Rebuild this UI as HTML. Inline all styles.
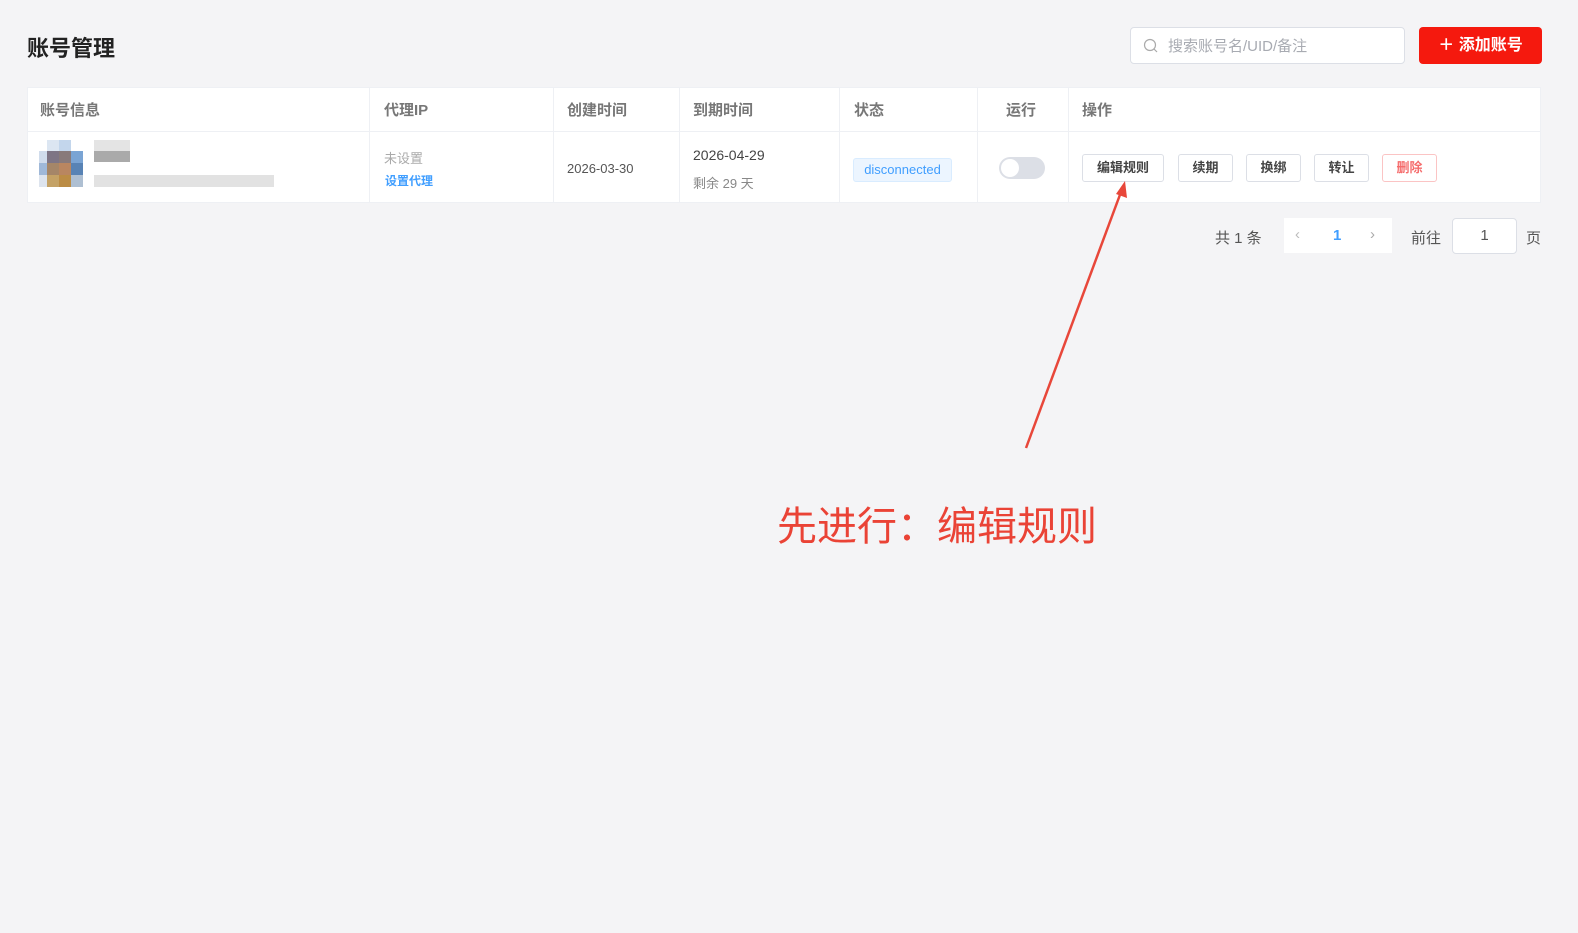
<!DOCTYPE html><html><head><meta charset="utf-8"><style>
body{margin:0;width:1578px;height:933px;background:#f4f4f6;font-family:"Liberation Sans","Noto Sans CJK SC",sans-serif;position:relative;overflow:hidden}
.a{position:absolute}
.h{font-size:15px;color:#777;font-weight:bold;top:99px}
.btn{position:absolute;top:154px;height:26px;border:1px solid #dcdfe6;border-radius:3px;background:#fff;font-size:13px;color:#444;font-weight:bold;text-align:center;line-height:26px}
.vl{position:absolute;top:87px;height:116px;width:1px;background:#eef0f4}
.px{position:absolute;width:12px;height:12px}
</style></head><body>
<div class="a" style="left:27px;top:31px;font-size:22px;font-weight:bold;color:#222">账号管理</div>
<div class="a" style="left:1130px;top:27px;width:273px;height:35px;background:#fff;border:1px solid #dcdfe6;border-radius:4px"></div>
<svg class="a" style="left:1143px;top:38px" width="15" height="15" viewBox="0 0 15 15"><circle cx="7" cy="7" r="5.5" fill="none" stroke="#aaa" stroke-width="1.2"/><path d="M11 11l3 3" stroke="#aaa" stroke-width="1.2"/></svg>
<div class="a" style="left:1168px;top:35px;font-size:15px;color:#a8abb2">搜索账号名/UID/备注</div>
<div class="a" style="left:1419px;top:27px;width:123px;height:37px;background:#f5190e;border-radius:4px;color:#fff;font-size:16px;font-weight:bold;line-height:37px;text-align:center">＋ 添加账号</div>
<div class="a" style="left:27px;top:87px;width:1514px;height:116px;background:#fff;border:1px solid #eef0f4;box-sizing:border-box"></div>
<div class="a" style="left:27px;top:131px;width:1514px;height:1px;background:#eef0f4"></div>
<div class="vl" style="left:369px"></div><div class="vl" style="left:553px"></div><div class="vl" style="left:679px"></div><div class="vl" style="left:839px"></div><div class="vl" style="left:977px"></div><div class="vl" style="left:1068px"></div>
<div class="a h" style="left:40px">账号信息</div><div class="a h" style="left:384px">代理IP</div><div class="a h" style="left:567px">创建时间</div><div class="a h" style="left:693px">到期时间</div><div class="a h" style="left:854px">状态</div><div class="a h" style="left:1006px">运行</div><div class="a h" style="left:1082px">操作</div>
<div class="px" style="left:47px;top:140px;background:#dce6f2"></div><div class="px" style="left:59px;top:140px;background:#c3d6ec"></div>
<div class="px" style="left:39px;top:151px;background:#d0dcec;width:8px"></div><div class="px" style="left:47px;top:151px;background:#7e7585"></div><div class="px" style="left:59px;top:151px;background:#887a7a"></div><div class="px" style="left:71px;top:151px;background:#7aa4d4"></div>
<div class="px" style="left:39px;top:163px;background:#9fb8d8;width:8px"></div><div class="px" style="left:47px;top:163px;background:#a58668"></div><div class="px" style="left:59px;top:163px;background:#b98660"></div><div class="px" style="left:71px;top:163px;background:#5883b5"></div>
<div class="px" style="left:39px;top:175px;background:#dde4ee;width:8px"></div><div class="px" style="left:47px;top:175px;background:#c4a266"></div><div class="px" style="left:59px;top:175px;background:#bb8c45"></div><div class="px" style="left:71px;top:175px;background:#aebfd2"></div>
<div class="a" style="left:94px;top:140px;width:36px;height:11px;background:#e4e4e4"></div><div class="a" style="left:94px;top:151px;width:36px;height:11px;background:#aaa"></div>
<div class="a" style="left:94px;top:175px;width:180px;height:12px;background:#e2e2e2"></div>
<div class="a" style="left:384px;top:148px;font-size:13px;color:#aaa">未设置</div>
<div class="a" style="left:385px;top:172px;font-size:12px;color:#409eff;font-weight:bold">设置代理</div>
<div class="a" style="left:567px;top:161px;font-size:13px;color:#555">2026-03-30</div>
<div class="a" style="left:693px;top:147px;font-size:14px;color:#444">2026-04-29</div>
<div class="a" style="left:693px;top:173px;font-size:13px;color:#888">剩余 29 天</div>
<div class="a" style="left:853px;top:158px;width:97px;height:22px;background:#ecf5ff;border:1px solid #d9ecff;border-radius:3px;font-size:13px;color:#409eff;text-align:center;line-height:22px">disconnected</div>
<div class="a" style="left:999px;top:157px;width:46px;height:22px;background:#dcdfe6;border-radius:11px"></div>
<div class="a" style="left:1001px;top:159px;width:18px;height:18px;background:#fff;border-radius:50%"></div>
<div class="btn" style="left:1082px;width:80px">编辑规则</div>
<div class="btn" style="left:1178px;width:53px">续期</div>
<div class="btn" style="left:1246px;width:53px">换绑</div>
<div class="btn" style="left:1314px;width:53px">转让</div>
<div class="btn" style="left:1382px;width:53px;color:#f56c6c;border-color:#fbc4c4">删除</div>
<div class="a" style="left:1215px;top:227px;font-size:15px;color:#555">共 1 条</div>
<div class="a" style="left:1284px;top:218px;width:108px;height:35px;background:#fff"></div>
<div class="a" style="left:1295px;top:226px;font-size:15px;color:#bbb">‹</div>
<div class="a" style="left:1333px;top:227px;font-size:15px;color:#409eff;font-weight:bold">1</div>
<div class="a" style="left:1370px;top:226px;font-size:15px;color:#aaa">›</div>
<div class="a" style="left:1411px;top:227px;font-size:15px;color:#555">前往</div>
<div class="a" style="left:1452px;top:218px;width:63px;height:34px;background:#fff;border:1px solid #dcdfe6;border-radius:4px;text-align:center;line-height:34px;font-size:15px;color:#555">1</div>
<div class="a" style="left:1526px;top:227px;font-size:15px;color:#555">页</div>
<svg class="a" style="left:0;top:0" width="1578" height="933"><line x1="1026" y1="448" x2="1121" y2="192" stroke="#e8473a" stroke-width="2.5"/><path d="M1125 181 L1127 198 L1116 194 Z" fill="#e8473a"/></svg>
<div class="a" style="left:777px;top:494px;font-size:40px;color:#ea4336">先进行：编辑规则</div>
</body></html>
